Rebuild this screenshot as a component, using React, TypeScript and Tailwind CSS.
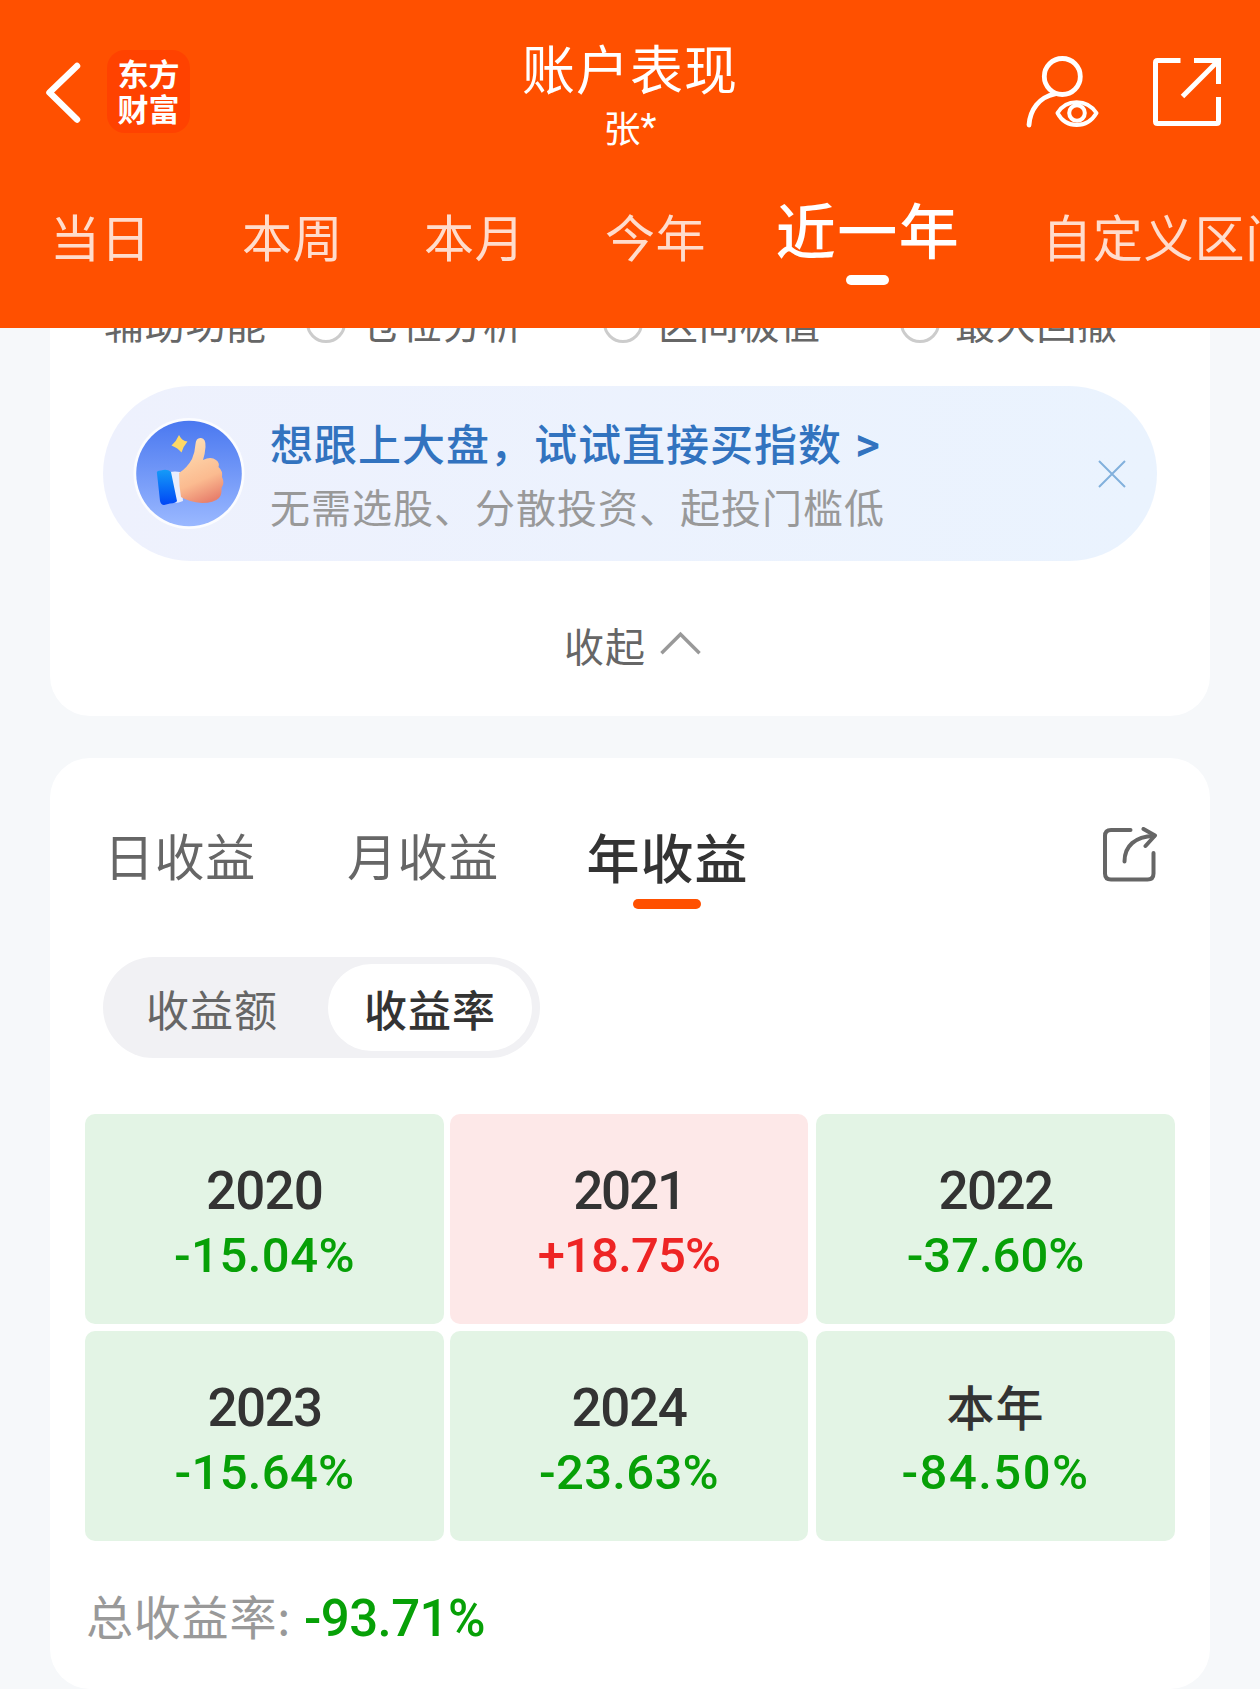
const periods = [
  { label: "当日", ml: "ml-[50px]" },
  { label: "本周", ml: "ml-[91px]" },
  { label: "本月", ml: "ml-[81px]" },
  { label: "今年", ml: "ml-[80px]" },
];

const helpers = ["仓位分析", "区间极值", "最大回撤"];

const years = [
  { year: "2020", rate: "-15.04%", up: false, yt: "tracking-[-0.9px]", rt: "tracking-[0.5px]" },
  { year: "2021", rate: "+18.75%", up: true, yt: "tracking-[-2.2px]", rt: "tracking-[-0.8px]" },
  { year: "2022", rate: "-37.60%", up: false, yt: "tracking-[-1.6px]", rt: "tracking-[0px]" },
  { year: "2023", rate: "-15.64%", up: false, yt: "tracking-[-1.6px]", rt: "tracking-[0.3px]" },
  { year: "2024", rate: "-23.63%", up: false, yt: "tracking-[-1.4px]", rt: "tracking-[0.3px]" },
  { year: "本年", rate: "-84.50%", up: false, yt: "tracking-[1px]", rt: "tracking-[1.5px]" },
];

function AccountIcon() {
  return (
    <svg width="74" height="76" viewBox="0 0 74 76" fill="none" stroke="white" strokeWidth="4.8" strokeLinecap="round">
      <circle cx="37.3" cy="20.5" r="18" />
      <path d="M4 69C5 54 14 41 30 38" />
      <path d="M32.5 57C41 42.5 62 42.5 71.5 57C62 73 41 73 32.5 57Z" strokeWidth="4" strokeLinejoin="round" />
      <circle cx="52" cy="57" r="7.8" strokeWidth="4" />
    </svg>
  );
}

function OpenIcon() {
  return (
    <svg width="68" height="68" viewBox="0 0 68 68" fill="none" stroke="white" strokeWidth="5">
      <path d="M27.5 2.5H4.5Q2.5 2.5 2.5 4.5V63.5Q2.5 65.5 4.5 65.5H63.5Q65.5 65.5 65.5 63.5V39" />
      <path d="M41 2.5H65.5V26" />
      <path d="M29.5 38.5L65 3" />
    </svg>
  );
}

function ThumbBadge() {
  return (
    <svg width="112" height="112" viewBox="0 0 112 112">
      <defs>
        <linearGradient id="sky" x1="0" y1="0" x2="0" y2="1">
          <stop offset="0" stopColor="#4a78f0" />
          <stop offset="1" stopColor="#9ab8ff" />
        </linearGradient>
        <linearGradient id="skin" x1="0.3" y1="0" x2="0.6" y2="1">
          <stop offset="0" stopColor="#ffdfb4" />
          <stop offset="0.65" stopColor="#fbbb90" />
          <stop offset="1" stopColor="#e8806c" />
        </linearGradient>
        <linearGradient id="cuff" x1="0" y1="0" x2="0" y2="1">
          <stop offset="0" stopColor="#149bf8" />
          <stop offset="1" stopColor="#0146f5" />
        </linearGradient>
      </defs>
      <circle cx="56" cy="55.5" r="55.5" fill="#fbfcff" />
      <circle cx="56" cy="55.5" r="52.8" fill="url(#sky)" />
      <path d="M46 17Q49 23 54.5 23.500Q50.5 28 48.500 34.500Q45 30 38.500 27.500Q43.500 23 46 17Z" fill="#ffd865" />
      <path d="M37 54Q42 53 47 54L50 83Q46 85 41 85Z" fill="#e9edfd" />
      <path d="M24 55.5Q23 52.5 28 52.5Q34 50.5 38 54L44 83Q43 85 37 85.5L31 87Q28 87 27 83Z" fill="url(#cuff)" />
      <path d="M46 55Q54 50 59 41Q62 34 62.5 26Q63 19.5 68 20Q73 20.5 72.5 29Q72 36 70 42Q78 38 83 42Q87 45 85.5 49Q90 53 89 59Q92 65 88.5 70Q89 77 86 80Q81 85 69 85Q56 84 48 79Q46 68 46 55Z" fill="url(#skin)" />
    </svg>
  );
}

function ShareIcon() {
  return (
    <svg width="56" height="56" viewBox="0 0 56 56" fill="none" stroke="#666" strokeWidth="4" strokeLinecap="round" strokeLinejoin="round">
      <path d="M28.5 3H9Q3 3 3 9V46.5Q3 52.5 9 52.5H45.5Q51.5 52.5 51.5 46.5V26" />
      <path d="M22.5 34.5C22.5 19 33 9.5 52 9" />
      <path d="M41.5 2L53 8.5L43.5 19" />
    </svg>
  );
}

function Header() {
  return (
    <header className="relative z-10 flex h-[328px] flex-col overflow-hidden bg-[#ff5000] text-white">
      <div className="flex h-[176px] items-start">
        <div className="flex w-[420px] pt-[50px] pl-[43px]">
          <svg className="mt-[10px]" width="40" height="66" viewBox="0 0 40 66" fill="none" stroke="white" strokeWidth="6.5" strokeLinecap="round" strokeLinejoin="round">
            <path d="M34 6L6.5 32.5L34 59.5" />
          </svg>
          <div className="ml-[24px] flex h-[83px] w-[83px] flex-col items-center rounded-[18px] bg-[#ff4200] pt-[5px] text-[31px] leading-[35px] font-bold">
            <span>东方</span>
            <span>财富</span>
          </div>
        </div>
        <div className="flex w-[420px] flex-col items-center pt-[35px]">
          <h1 className="text-[53px] leading-[64px] tracking-[1px]">账户表现</h1>
          <span className="mt-[6px] flex text-[37px] leading-[44px]">
            张<span className="font-[Roboto]">*</span>
          </span>
        </div>
        <div className="flex w-[420px] pl-[185px]">
          <div className="mt-[56px]"><AccountIcon /></div>
          <div className="mt-[58px] ml-[54px]"><OpenIcon /></div>
        </div>
      </div>
      <nav className="flex w-[1400px] items-start whitespace-nowrap">
        {periods.map((p) => (
          <span key={p.label} className={`${p.ml} mt-[29px] w-[101px] text-[50px] leading-[60px] tracking-[0.5px] text-[#ffdccc]`}>{p.label}</span>
        ))}
        <div className="ml-[69px] flex w-[185px] flex-col items-center">
          <span className="mt-[16px] ml-[1px] text-[60px] leading-[72px] font-medium tracking-[1.5px]">近一年</span>
          <span className="mt-[11px] h-[10px] w-[43px] rounded-full bg-white" />
        </div>
        <span className="mt-[29px] ml-[82px] text-[50px] leading-[60px] tracking-[0.8px] text-[#ffdccc]">自定义区间</span>
      </nav>
    </header>
  );
}

function AnalysisCard() {
  return (
    <section className="mx-[50px] -mt-[28px] flex h-[416px] flex-col rounded-b-[40px] bg-white">
      <div className="flex h-[44px] items-center pl-[54px] text-[40px] leading-[44px] tracking-[0.7px] whitespace-nowrap text-[#666]">
        <span className="w-[202px]">辅助功能</span>
        {helpers.map((h) => (
          <div key={h} className="flex w-[297px] items-center">
            <span className="mt-[2px] h-[40px] w-[40px] rounded-full border-[3px] border-[#ccc]" />
            <span className="ml-[15px]">{h}</span>
          </div>
        ))}
      </div>
      <div className="mt-[42px] ml-[53px] flex h-[175px] w-[1054px] items-center rounded-full bg-gradient-to-r from-[#eef1fd] to-[#eaf3fe] pl-[30px]">
        <ThumbBadge />
        <div className="ml-[25px] flex w-[800px] flex-col">
          <span className="text-[43px] leading-[56px] font-medium tracking-[1px] whitespace-nowrap text-[#3273bf]">
            想跟上大盘，试试直接买指数<span className="ml-[13px] font-[Roboto] text-[48px] leading-[40px]">&gt;</span>
          </span>
          <span className="mt-[8px] text-[40px] leading-[56px] tracking-[1px] whitespace-nowrap text-[#999]">无需选股、分散投资、起投门槛低</span>
        </div>
        <svg className="ml-[28px]" width="28" height="28" viewBox="0 0 28 28" stroke="#82b0dc" strokeWidth="2">
          <path d="M1 1L27 27M27 1L1 27" />
        </svg>
      </div>
      <div className="mt-[59px] flex h-[50px] items-center pl-[514px] text-[40px] leading-[50px] tracking-[1px] text-[#666]">
        收起
        <svg className="mt-[-4px] ml-[14px]" width="41" height="24" viewBox="0 0 42 24" fill="none" stroke="#999" strokeWidth="3.5">
          <path d="M1.5 22.5L21 3L40.5 22.5" />
        </svg>
      </div>
    </section>
  );
}

function IncomeCard() {
  return (
    <section className="mx-[50px] mt-[42px] flex h-[931px] flex-col rounded-[40px] bg-white">
      <div className="flex h-[152px] items-start pt-[66px] whitespace-nowrap">
        <span className="ml-[54px] w-[243px] text-[50px] leading-[60px] tracking-[0.6px] text-[#666]">日收益</span>
        <span className="w-[190px] text-[50px] leading-[60px] tracking-[0.6px] text-[#666]">月收益</span>
        <div className="ml-[49px] flex w-[162px] flex-col items-center">
          <span className="ml-[1px] text-[53px] leading-[64px] font-medium tracking-[1px] text-[#333]">年收益</span>
          <span className="mt-[11px] h-[10px] w-[68px] rounded-full bg-[#ff5000]" />
        </div>
        <div className="mt-[3px] ml-[354px]"><ShareIcon /></div>
      </div>
      <div className="mt-[47px] ml-[53px] flex h-[101px] w-[437px] items-center rounded-full bg-[#f1f1f4] text-[43px] leading-[56px] tracking-[1px]">
        <span className="w-[225px] pl-[43px] text-[#666]">收益额</span>
        <span className="flex h-[87px] w-[204px] items-center justify-center rounded-full bg-white font-medium text-[#333]">收益率</span>
      </div>
      <div className="mt-[56px] ml-[35px] grid w-[1090px] grid-cols-[359px_358px_361px] gap-x-[6px] gap-y-[7px]">
        {years.map((y, i) => (
          <div key={y.year} className={`flex h-[210px] flex-col items-center rounded-[10px] pt-[45px] ${i % 3 === 2 ? "ml-[2px]" : ""} ${y.up ? "bg-[#fde8e8]" : "bg-[#e3f4e5]"}`}>
            {y.year === "本年" ? (
              <span className="-mt-[3px] mb-[3px] text-[48px] leading-[64px] font-medium tracking-[1px] text-[#333]">{y.year}</span>
            ) : (
              <span className={`font-[Roboto] text-[53px] leading-[64px] font-medium text-[#333] ${y.yt}`}>{y.year}</span>
            )}
            <span className={`font-[Roboto] text-[49px] leading-[66px] font-medium ${y.rt} ${y.up ? "text-[#ee2424]" : "text-[#07a007]"}`}>{y.rate}</span>
          </div>
        ))}
      </div>
      <div className="mt-[42px] flex items-start pl-[36px] whitespace-nowrap">
        <span className="text-[47px] leading-[64px] tracking-[0.8px] text-[#999]">总收益率:</span>
        <span className="mt-[4px] ml-[13px] font-[Roboto] text-[51px] leading-[64px] font-medium tracking-[-0.6px] text-[#07a007]">-93.71%</span>
      </div>
    </section>
  );
}

export default function App() {
  return (
    <div className="h-[1689px] w-[1260px] overflow-hidden bg-[#f6f8fa] font-['Noto_Sans_CJK_SC',sans-serif]">
      <Header />
      <AnalysisCard />
      <IncomeCard />
    </div>
  );
}
